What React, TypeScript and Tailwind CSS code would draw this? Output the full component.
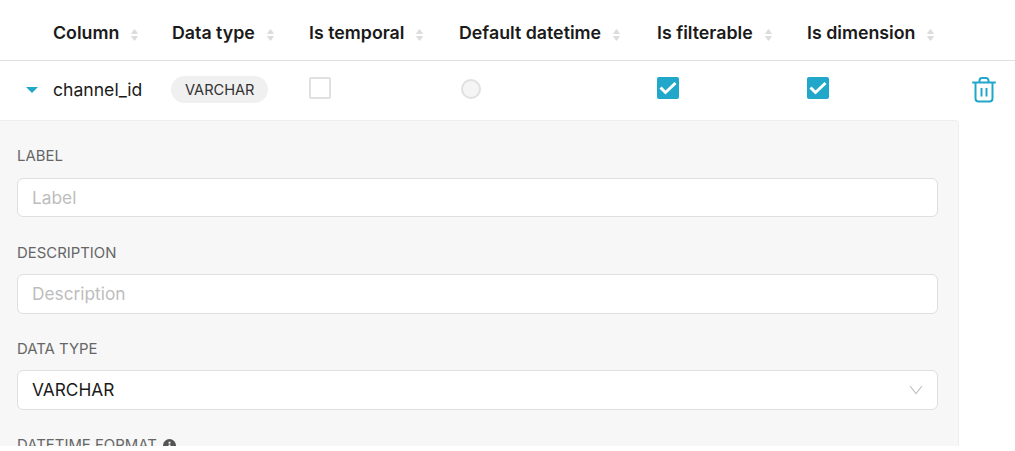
const SortIcon = () => (
  <svg width="7" height="12" viewBox="0 0 7 12" className="ml-3 mt-[2px] shrink-0" fill="#dcdcdc" stroke="#dcdcdc" strokeWidth="1" strokeLinejoin="round">
    <path d="M3.5 .6 L6.4 4.4 L.6 4.4 Z" />
    <path d="M3.5 11.4 L6.4 7.6 L.6 7.6 Z" />
  </svg>
)

const HeaderCell = ({ label, className }: { label: string; className: string }) => (
  <div className={`flex items-center ${className}`}>
    <span>{label}</span>
    <SortIcon />
  </div>
)

const CheckedBox = () => (
  <div className="mb-[5px] flex h-[22px] w-[22px] items-center justify-center rounded-[2px] bg-[#20a7c9]">
    <svg width="18" height="14" viewBox="0 0 18 14" fill="none" stroke="#ffffff" strokeWidth="3">
      <path d="M1.5 6.5 L6.5 11.5 L16.5 2" />
    </svg>
  </div>
)

const TrashIcon = () => (
  <svg width="24" height="26" viewBox="0 0 24 26" fill="none" stroke="#20a7c9" strokeWidth="2">
    <path d="M1 5.5 H23" strokeLinecap="round" />
    <path d="M7.5 5 V3.5 A2.5 2.5 0 0 1 10 1 H14 A2.5 2.5 0 0 1 16.5 3.5 V5" />
    <path d="M3.5 6 V21.5 A3 3 0 0 0 6.5 24.5 H17.5 A3 3 0 0 0 20.5 21.5 V6" />
    <path d="M9.5 11 V19.5 M14.5 11 V19.5" />
  </svg>
)

const Field = ({ label, className, children }: { label: string; className: string; children: React.ReactNode }) => (
  <div className={className}>
    <div className="pt-[1px] text-[14.9px] leading-[21px] text-[#666666]">{label}</div>
    {children}
  </div>
)

const App = () => {
  return (
    <div className="h-[446px] w-[1015px] overflow-hidden bg-white font-['Inter',sans-serif] text-[#1a1a1a]">
      <div className="flex h-[61px] items-center border-b border-[#e0e0e0] pl-[53px] pt-[7px] text-[17.8px] font-semibold">
        <HeaderCell label="Column" className="w-[119px]" />
        <HeaderCell label="Data type" className="w-[137px]" />
        <HeaderCell label="Is temporal" className="w-[150px]" />
        <HeaderCell label="Default datetime" className="w-[198px]" />
        <HeaderCell label="Is filterable" className="w-[150px]" />
        <HeaderCell label="Is dimension" className="w-[150px]" />
      </div>

      <div className="flex h-[59px] items-center pb-[1px] pl-[53px]">
        <div className="relative w-[118px] text-[17.6px]">
          <span className="absolute left-[-27.5px] top-[10px] h-0 w-0 border-x-[6px] border-t-[6px] border-x-transparent border-t-[#20a7c9]" />
          channel_id
        </div>
        <div className="mb-[2px] w-[138px]">
          <span className="inline-block rounded-full bg-[#f0f0f0] pb-[2px] pl-[14px] pr-[13px] pt-[4px] text-[14.6px] leading-[21px] text-[#323232]">
            VARCHAR
          </span>
        </div>
        <div className="w-[150px]">
          <div className="mb-[5px] h-[22px] w-[22px] rounded-[2px] border-2 border-[#e0e0e0] bg-white" />
        </div>
        <div className="w-[198px] pl-[2px]">
          <div className="mb-[2px] h-[20px] w-[20px] rounded-full border-2 border-[#e0e0e0] bg-[#f5f5f5]" />
        </div>
        <div className="w-[150px]">
          <CheckedBox />
        </div>
        <div className="w-[165px]">
          <CheckedBox />
        </div>
        <TrashIcon />
      </div>

      <div className="w-[959px] rounded-tr-[4px] border-r border-t border-[#eeeeee] bg-[#f7f7f7] pb-[20px] pl-[17px] pr-[20px] pt-[24px]">
        <Field label="LABEL" className="mb-[25px]">
          <input
            placeholder="Label"
            className="mt-[11px] h-[39px] w-full rounded-[6px] border border-[#dedee3] bg-white px-[14px] text-[17.3px] placeholder:text-[#bdbdbd]"
          />
        </Field>
        <Field label="DESCRIPTION" className="mb-[24px]">
          <input
            placeholder="Description"
            className="mt-[10px] h-[40px] w-full rounded-[6px] border border-[#dedee3] bg-white px-[14px] pb-[1px] text-[17.3px] placeholder:text-[#bdbdbd]"
          />
        </Field>
        <Field label="DATA TYPE" className="mb-[24px]">
          <div className="mt-[10px] flex h-[40px] w-full items-center justify-between rounded-[6px] border border-[#dedee3] bg-white px-[14px] text-[17.3px]">
            <span>VARCHAR</span>
            <svg width="14" height="10" viewBox="0 0 14 10" fill="none" stroke="#c0c0c0" strokeWidth="1.2">
              <path d="M1 1 L7 8.5 L13 1" />
            </svg>
          </div>
        </Field>
        <div className="flex items-center gap-[6px] pt-[1px] text-[14.9px] leading-[21px] text-[#666666]">
          DATETIME FORMAT
          <svg width="13" height="13" viewBox="0 0 14 14">
            <circle cx="7" cy="7" r="7" fill="#555555" />
            <rect x="6" y="6" width="2" height="5" fill="#ffffff" />
            <rect x="6" y="3" width="2" height="2" fill="#ffffff" />
          </svg>
        </div>
      </div>
    </div>
  )
}

export default App
